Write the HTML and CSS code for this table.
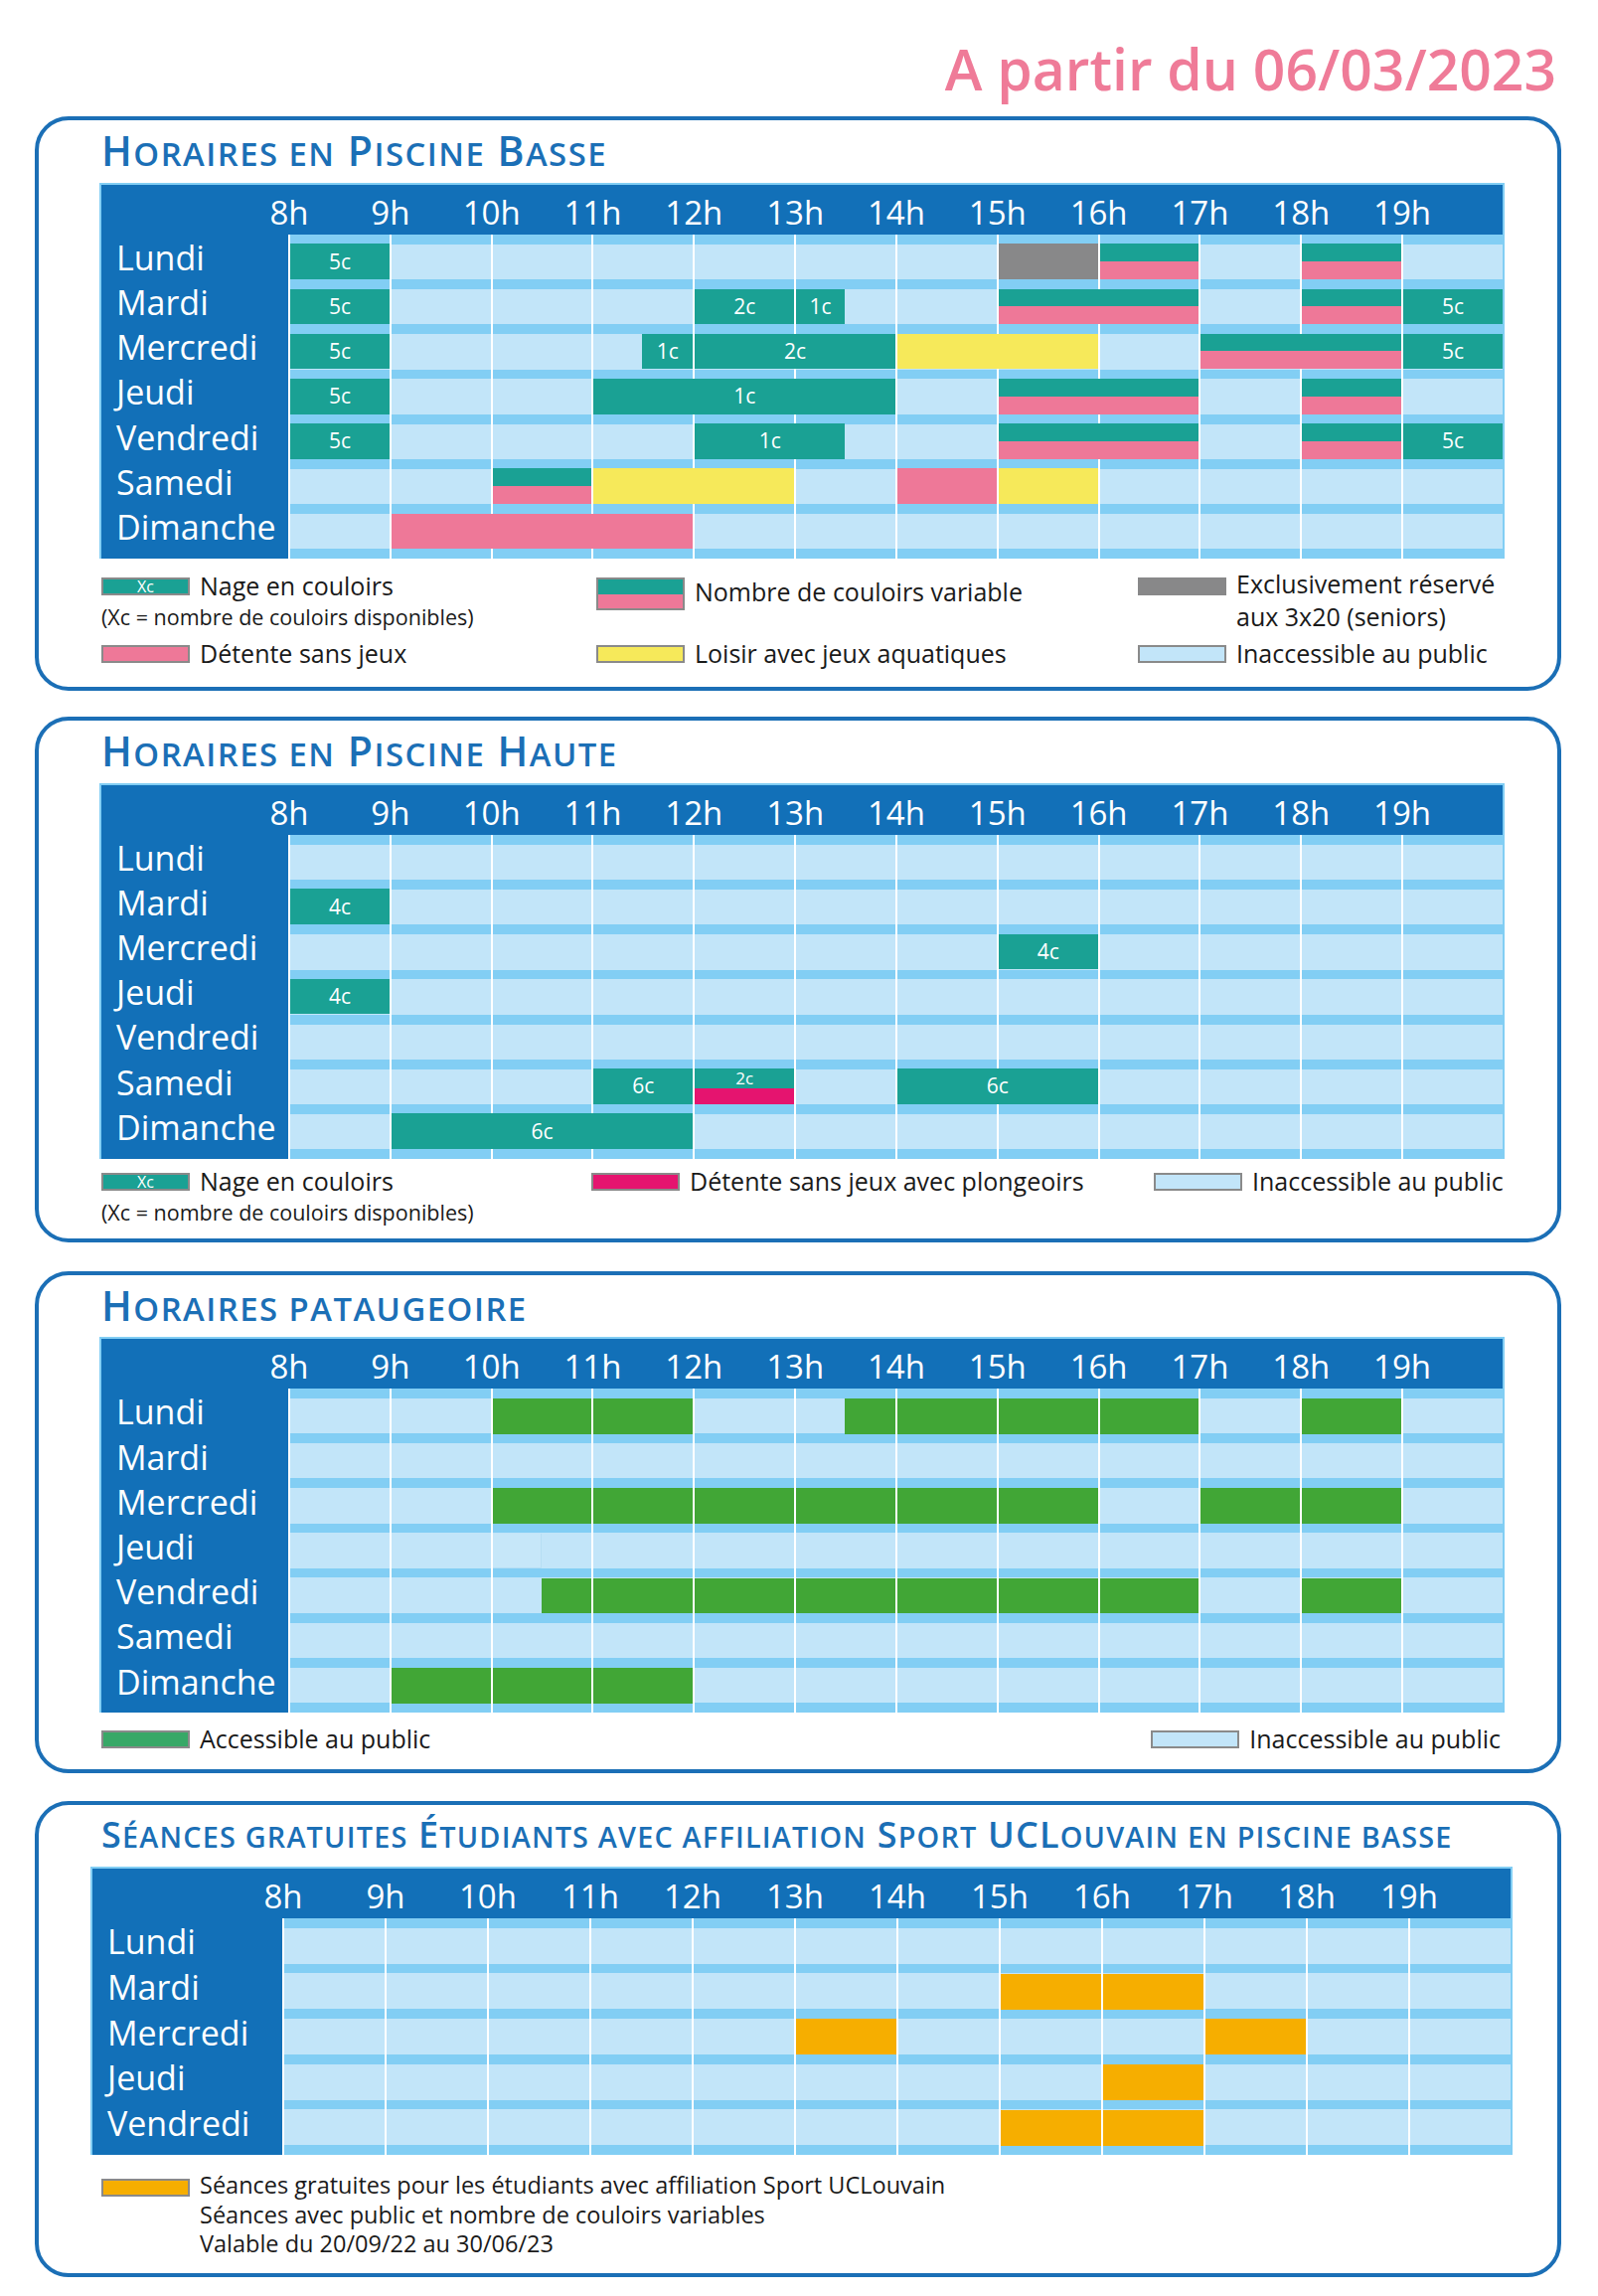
FILE: index.html
```html
<!DOCTYPE html>
<html lang="fr">
<head>
<meta charset="utf-8">
<title>Horaires piscine</title>
<link rel="stylesheet" href="styles.css">
</head>
<body>
<div class="page">
  <div class="date">A partir du 06/03/2023</div>

  <section class="box box-1">
    <h2 class="title">H<span class="sc">oraires en</span> P<span class="sc">iscine</span> B<span class="sc">asse</span></h2>
    <div class="sched">
      <div class="hours"><span>8h</span><span>9h</span><span>10h</span><span>11h</span><span>12h</span><span>13h</span><span>14h</span><span>15h</span><span>16h</span><span>17h</span><span>18h</span><span>19h</span></div>
      <div class="body">
        <div class="days"><div>Lundi</div><div>Mardi</div><div>Mercredi</div><div>Jeudi</div><div>Vendredi</div><div>Samedi</div><div>Dimanche</div></div>
        <div class="grid">
          <div class="row">
            <b class="k t" style="grid-column:1/3">5c</b>
            <b class="k g" style="grid-column:15/17"></b>
            <b class="k s" style="grid-column:17/19"></b>
            <b class="k s" style="grid-column:21/23"></b>
          </div>
          <div class="row">
            <b class="k t" style="grid-column:1/3">5c</b>
            <b class="k t" style="grid-column:9/11">2c</b>
            <b class="k t" style="grid-column:11/12">1c</b>
            <b class="k s" style="grid-column:15/19"></b>
            <b class="k s" style="grid-column:21/23"></b>
            <b class="k t" style="grid-column:23/25">5c</b>
          </div>
          <div class="row">
            <b class="k t" style="grid-column:1/3">5c</b>
            <b class="k t hs" style="grid-column:8/9">1c</b>
            <b class="k t" style="grid-column:9/13">2c</b>
            <b class="k y" style="grid-column:13/17"></b>
            <b class="k s" style="grid-column:19/23"></b>
            <b class="k t" style="grid-column:23/25">5c</b>
          </div>
          <div class="row">
            <b class="k t" style="grid-column:1/3">5c</b>
            <b class="k t" style="grid-column:7/13">1c</b>
            <b class="k s" style="grid-column:15/19"></b>
            <b class="k s" style="grid-column:21/23"></b>
          </div>
          <div class="row">
            <b class="k t" style="grid-column:1/3">5c</b>
            <b class="k t" style="grid-column:9/12">1c</b>
            <b class="k s" style="grid-column:15/19"></b>
            <b class="k s" style="grid-column:21/23"></b>
            <b class="k t" style="grid-column:23/25">5c</b>
          </div>
          <div class="row">
            <b class="k s" style="grid-column:5/7"></b>
            <b class="k y" style="grid-column:7/11"></b>
            <b class="k p" style="grid-column:13/15"></b>
            <b class="k y" style="grid-column:15/17"></b>
          </div>
          <div class="row">
            <b class="k p" style="grid-column:3/9"></b>
          </div>
        </div>
      </div>
    </div>
    <div class="legend legend-1">
      <div class="item">
        <span class="sw sw-t">Xc</span>
        <div class="txt">Nage en couloirs<div class="sub">(Xc = nombre de couloirs disponibles)</div></div>
      </div>
      <div class="item item-tall">
        <span class="sw sw-s"></span>
        <div class="txt">Nombre de couloirs variable</div>
      </div>
      <div class="item">
        <span class="sw sw-g"></span>
        <div class="txt txt-2l">Exclusivement réservé<br>aux 3x20 (seniors)</div>
      </div>
      <div class="item">
        <span class="sw sw-p"></span>
        <div class="txt">Détente sans jeux</div>
      </div>
      <div class="item">
        <span class="sw sw-y"></span>
        <div class="txt">Loisir avec jeux aquatiques</div>
      </div>
      <div class="item">
        <span class="sw sw-l"></span>
        <div class="txt">Inaccessible au public</div>
      </div>
    </div>
  </section>

  <section class="box box-2">
    <h2 class="title">H<span class="sc">oraires en</span> P<span class="sc">iscine</span> H<span class="sc">aute</span></h2>
    <div class="sched">
      <div class="hours"><span>8h</span><span>9h</span><span>10h</span><span>11h</span><span>12h</span><span>13h</span><span>14h</span><span>15h</span><span>16h</span><span>17h</span><span>18h</span><span>19h</span></div>
      <div class="body">
        <div class="days"><div>Lundi</div><div>Mardi</div><div>Mercredi</div><div>Jeudi</div><div>Vendredi</div><div>Samedi</div><div>Dimanche</div></div>
        <div class="grid">
          <div class="row"></div>
          <div class="row">
            <b class="k t" style="grid-column:1/3">4c</b>
          </div>
          <div class="row">
            <b class="k t" style="grid-column:15/17">4c</b>
          </div>
          <div class="row">
            <b class="k t" style="grid-column:1/3">4c</b>
          </div>
          <div class="row"></div>
          <div class="row">
            <b class="k t" style="grid-column:7/9">6c</b>
            <b class="k m" style="grid-column:9/11"><i class="m-top">2c</i><i class="m-bot"></i></b>
            <b class="k t" style="grid-column:13/17">6c</b>
          </div>
          <div class="row">
            <b class="k t" style="grid-column:3/9">6c</b>
          </div>
        </div>
      </div>
    </div>
    <div class="legend legend-2">
      <div class="item">
        <span class="sw sw-t">Xc</span>
        <div class="txt">Nage en couloirs<div class="sub">(Xc = nombre de couloirs disponibles)</div></div>
      </div>
      <div class="item">
        <span class="sw sw-m"></span>
        <div class="txt">Détente sans jeux avec plongeoirs</div>
      </div>
      <div class="item">
        <span class="sw sw-l"></span>
        <div class="txt">Inaccessible au public</div>
      </div>
    </div>
  </section>

  <section class="box box-3">
    <h2 class="title">H<span class="sc">oraires pataugeoire</span></h2>
    <div class="sched">
      <div class="hours"><span>8h</span><span>9h</span><span>10h</span><span>11h</span><span>12h</span><span>13h</span><span>14h</span><span>15h</span><span>16h</span><span>17h</span><span>18h</span><span>19h</span></div>
      <div class="body">
        <div class="days"><div>Lundi</div><div>Mardi</div><div>Mercredi</div><div>Jeudi</div><div>Vendredi</div><div>Samedi</div><div>Dimanche</div></div>
        <div class="grid">
          <div class="row">
            <b class="k G" style="grid-column:5/7"></b>
            <b class="k G" style="grid-column:7/9"></b>
            <b class="k G hs" style="grid-column:12/13"></b>
            <b class="k G" style="grid-column:13/15"></b>
            <b class="k G" style="grid-column:15/17"></b>
            <b class="k G" style="grid-column:17/19"></b>
            <b class="k G" style="grid-column:21/23"></b>
          </div>
          <div class="row"></div>
          <div class="row">
            <b class="k G" style="grid-column:5/7"></b>
            <b class="k G" style="grid-column:7/9"></b>
            <b class="k G" style="grid-column:9/11"></b>
            <b class="k G" style="grid-column:11/13"></b>
            <b class="k G" style="grid-column:13/15"></b>
            <b class="k G" style="grid-column:15/17"></b>
            <b class="k G" style="grid-column:19/21"></b>
            <b class="k G" style="grid-column:21/23"></b>
          </div>
          <div class="row">
            <b class="k f" style="grid-column:5/6"></b>
          </div>
          <div class="row">
            <b class="k G hs" style="grid-column:6/7"></b>
            <b class="k G" style="grid-column:7/9"></b>
            <b class="k G" style="grid-column:9/11"></b>
            <b class="k G" style="grid-column:11/13"></b>
            <b class="k G" style="grid-column:13/15"></b>
            <b class="k G" style="grid-column:15/17"></b>
            <b class="k G" style="grid-column:17/19"></b>
            <b class="k G" style="grid-column:21/23"></b>
          </div>
          <div class="row"></div>
          <div class="row">
            <b class="k G" style="grid-column:3/5"></b>
            <b class="k G" style="grid-column:5/7"></b>
            <b class="k G" style="grid-column:7/9"></b>
          </div>
        </div>
      </div>
    </div>
    <div class="legend legend-3">
      <div class="item">
        <span class="sw sw-G"></span>
        <div class="txt">Accessible au public</div>
      </div>
      <div class="item">
        <span class="sw sw-l"></span>
        <div class="txt">Inaccessible au public</div>
      </div>
    </div>
  </section>

  <section class="box box-4">
    <h2 class="title title-sm">S<span class="sc">éances gratuites</span> É<span class="sc">tudiants avec affiliation</span> S<span class="sc">port</span> UCL<span class="sc">ouvain en piscine basse</span></h2>
    <div class="sched sched-wide">
      <div class="hours"><span>8h</span><span>9h</span><span>10h</span><span>11h</span><span>12h</span><span>13h</span><span>14h</span><span>15h</span><span>16h</span><span>17h</span><span>18h</span><span>19h</span></div>
      <div class="body">
        <div class="days"><div>Lundi</div><div>Mardi</div><div>Mercredi</div><div>Jeudi</div><div>Vendredi</div></div>
        <div class="grid">
          <div class="row"></div>
          <div class="row">
            <b class="k o" style="grid-column:15/17"></b>
            <b class="k o" style="grid-column:17/19"></b>
          </div>
          <div class="row">
            <b class="k o" style="grid-column:11/13"></b>
            <b class="k o" style="grid-column:19/21"></b>
          </div>
          <div class="row">
            <b class="k o" style="grid-column:17/19"></b>
          </div>
          <div class="row">
            <b class="k o" style="grid-column:15/17"></b>
            <b class="k o" style="grid-column:17/19"></b>
          </div>
        </div>
      </div>
    </div>
    <div class="legend legend-4">
      <div class="item">
        <span class="sw sw-o"></span>
        <div class="txt txt-3l">Séances gratuites pour les étudiants avec affiliation Sport UCLouvain<br>Séances avec public et nombre de couloirs variables<br>Valable du 20/09/22 au 30/06/23</div>
      </div>
    </div>
  </section>
</div>
</body>
</html>
```

FILE: styles.css
```css
* {
  box-sizing: border-box;
  margin: 0;
  padding: 0;
}

body {
  margin: 0;
  background: #ffffff;
  font-family: "Open Sans", "DejaVu Sans", sans-serif;
  color: #1a1a1a;
}

.page {
  width: 1608px;
  padding: 30px 0 20px 35px;
}

.date {
  width: 1536px;
  padding-right: 5px;
  text-align: right;
  font-size: 57px;
  line-height: 79px;
  font-weight: 600;
  color: #ef7b98;
}

/* ---------- boxes ---------- */
.box {
  width: 1536px;
  border: 4px solid #1b6fb6;
  border-radius: 34px;
  padding: 10px 0 20px 61px;
  background: #fff;
}

.box-1 { margin-top: 8px; }
.box-2 { margin-top: 26px; padding-bottom: 13px; }
.box-3 { margin-top: 29px; padding-bottom: 17px; }
.box-4 { margin-top: 28px; padding-bottom: 14px; }

.title {
  margin-left: 2px;
  font-size: 41px;
  line-height: 40px;
  font-weight: 600;
  color: #1b6fb6;
  letter-spacing: 1.5px;
  white-space: nowrap;
}

.title-sm {
  font-size: 36px;
  letter-spacing: 1.2px;
}

.sc {
  font-size: 0.8em;
  line-height: 1;
  text-transform: uppercase;
}

/* ---------- schedule table ---------- */
.sched {
  --col: 101.833px;
  --labelw: 188px;
  --pitch: 45.2px;
  --stripe: 9.7px;
  --cell: 35.5px;
  margin-top: 12px;
  width: calc(var(--labelw) + 12 * var(--col) + 4px);
  border: 2px solid #82cef4;
  border-bottom: 0;
  background: #1270b8;
}

.sched-wide {
  --col: 103px;
  --labelw: 191px;
  --pitch: 45.7px;
  --stripe: 9.5px;
  --cell: 36.2px;
  margin-left: -9px;
}

.hours {
  display: flex;
  align-items: flex-end;
  height: 50px;
  padding-left: calc(var(--labelw) - var(--col) / 2 + 1px);
}

.hours span {
  flex: 0 0 var(--col);
  text-align: center;
  color: #fff;
  font-size: 33px;
  line-height: 44px;
  font-weight: 500;
}

.body {
  display: flex;
}

.days {
  flex: none;
  width: var(--labelw);
}

.days div {
  height: var(--pitch);
  line-height: calc(var(--pitch) + 2px);
  padding-left: 15px;
  color: #fff;
  font-size: 34px;
  font-weight: 500;
  white-space: nowrap;
}

.grid {
  width: calc(12 * var(--col));
  padding-bottom: var(--stripe);
  background:
    repeating-linear-gradient(90deg, #ffffff 0 2px, transparent 2px var(--col)),
    repeating-linear-gradient(180deg, #82cef4 0 var(--stripe), #c2e5f9 var(--stripe) var(--pitch));
}

.row {
  display: grid;
  grid-template-columns: repeat(24, 1fr);
  height: var(--cell);
  margin-top: var(--stripe);
}

.k {
  margin-left: 2px;
  display: flex;
  align-items: center;
  justify-content: center;
  color: #fff;
  font-size: 21px;
  font-weight: 400;
  line-height: 1;
}

.k.hs { margin-left: 0; }

.t { background: #1aa194; }
.p { background: #ee7898; }
.y { background: #f6e95a; }
.g { background: #888889; }
.G { background: #41a636; }
.o { background: #f6ae00; }
.f { background: #c6e7f9; border-right: 1px solid #b6def4; border-bottom: 1px solid #b6def4; }
.s { background: linear-gradient(180deg, #1aa194 0 50%, #ee7898 50% 100%); }

.m {
  flex-direction: column;
  align-items: stretch;
}

.m-top {
  flex: 1.1;
  display: flex;
  align-items: center;
  justify-content: center;
  background: #1aa194;
  font-style: normal;
  font-size: 17px;
}

.m-bot {
  flex: 0.9;
  background: #e5146f;
}

/* ---------- legends ---------- */
.legend {
  margin-left: 2px;
  font-size: 25px;
  line-height: 28px;
  color: #1a1a1a;
}

.legend-1 {
  display: grid;
  grid-template-columns: 498px 545px auto;
  grid-template-rows: 68px auto;
  margin-top: 13px;
}

.legend-2 {
  display: grid;
  grid-template-columns: 493px 566px auto;
  margin-top: 8px;
}

.legend-3 {
  display: flex;
  justify-content: space-between;
  width: 1408px;
  margin-top: 12px;
}

.legend-4 {
  margin-top: 16px;
}

.item {
  display: flex;
  align-items: flex-start;
  gap: 10px;
}

.item-tall .sw {
  height: 33px;
}

.item-tall .txt {
  margin-top: 6px;
}

.txt {
  white-space: nowrap;
}

.txt-2l {
  line-height: 33px;
  margin-top: -4px;
}

.txt-3l {
  font-size: 23.5px;
  line-height: 29.5px;
}

.legend-4 .sw {
  margin-top: 8px;
}

.sub {
  margin-top: 5px;
  margin-left: -99px;
  font-size: 21.5px;
  line-height: 26px;
}

.sw {
  flex: none;
  width: 89px;
  height: 18px;
  margin-top: 6px;
  border: 2px solid #8a8a8a;
  display: flex;
  align-items: center;
  justify-content: center;
  color: #fff;
  font-size: 16px;
  line-height: 1;
}

.sw-t { background: #1aa194; }
.sw-s { background: linear-gradient(180deg, #1aa194 0 50%, #ee7898 50% 100%); }
.sw-g { background: #888889; border-color: #888889; }
.sw-p { background: #ee7898; }
.sw-y { background: #f6e95a; }
.sw-l { background: #c2e5f9; }
.sw-m { background: #e5146f; }
.sw-G { background: #38a867; }
.sw-o { background: #f6ae00; }
```
